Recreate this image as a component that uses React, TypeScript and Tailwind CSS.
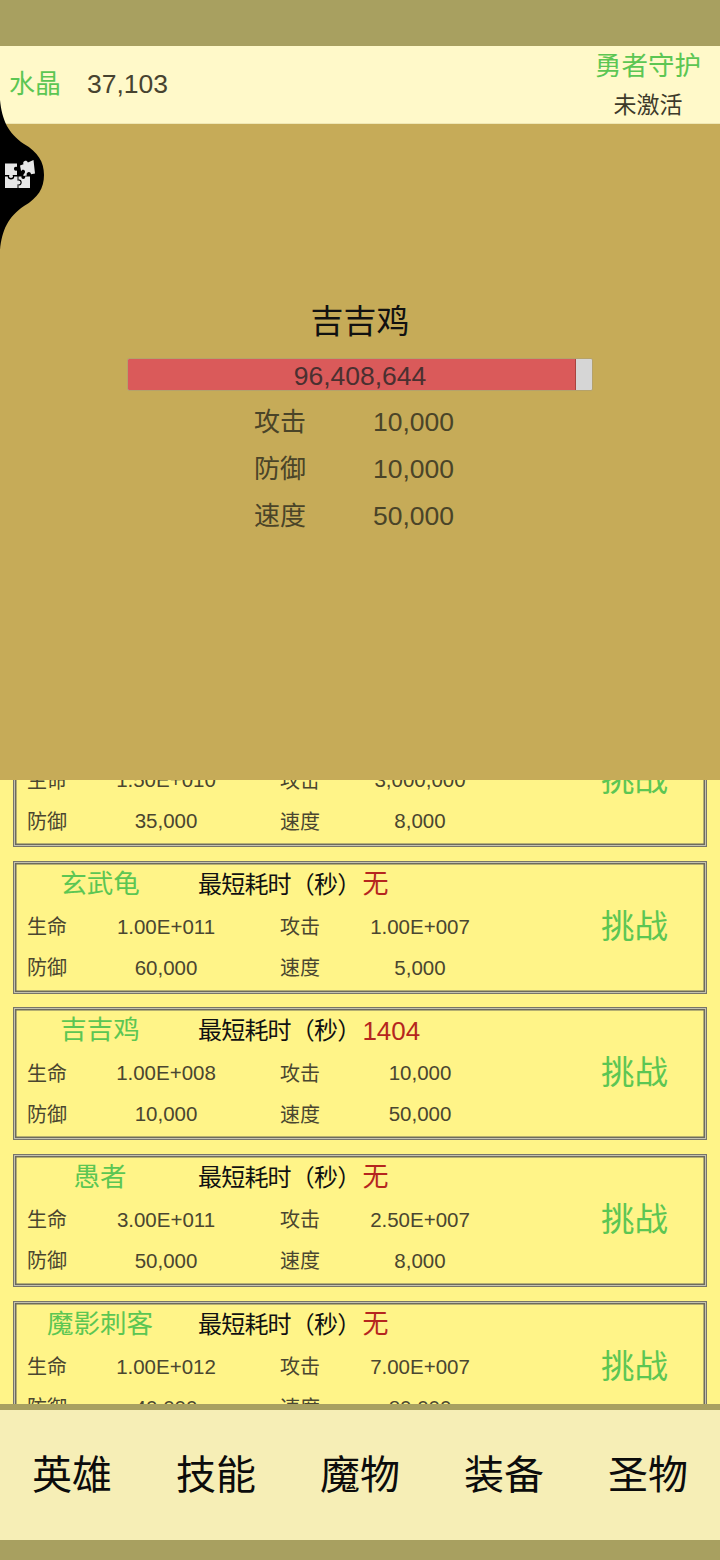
const FONT = "font-['Liberation_Sans','Noto_Sans_CJK_SC',sans-serif]";

const monsters = [
  { name: "", time: "", hp: "1.50E+010", atk: "3,000,000", def: "35,000", spd: "8,000" },
  { name: "玄武龟", time: "无", hp: "1.00E+011", atk: "1.00E+007", def: "60,000", spd: "5,000" },
  { name: "吉吉鸡", time: "1404", hp: "1.00E+008", atk: "10,000", def: "10,000", spd: "50,000" },
  { name: "愚者", time: "无", hp: "3.00E+011", atk: "2.50E+007", def: "50,000", spd: "8,000" },
  { name: "魔影刺客", time: "无", hp: "1.00E+012", atk: "7.00E+007", def: "40,000", spd: "80,000" },
];

const stats = [
  { label: "攻击", value: "10,000" },
  { label: "防御", value: "10,000" },
  { label: "速度", value: "50,000" },
];

const tabs = ["英雄", "技能", "魔物", "装备", "圣物"];

function Row({ a, b, c, d }: { a: string; b: string; c: string; d: string }) {
  return (
    <div className="flex h-[41px] items-center whitespace-nowrap text-[20.5px] text-[#4a4630]">
      <div className="w-[40px] shrink-0 text-[20px]">{a}</div>
      <div className="w-[198px] shrink-0 text-center">{b}</div>
      <div className="ml-[15px] w-[40px] shrink-0 text-[20px]">{c}</div>
      <div className="w-[200px] shrink-0 text-center">{d}</div>
    </div>
  );
}

function MonsterCard({ m }: { m: (typeof monsters)[number] }) {
  return (
    <div className="relative h-[133px] shrink-0 border border-[#77756a] bg-[#fff488] px-[13px] pt-[3px] shadow-[inset_0_0_0_1px_#c4c2ae,inset_0_0_0_2.500px_#6d6b5c]">
      <div className="mb-[2px] flex h-[40px] items-center whitespace-nowrap">
        <div className="w-[146px] shrink-0 text-center text-[26.500px] text-[#5cc653]">{m.name}</div>
        <div className="ml-[25px] text-[24px] tracking-[-0.8px] text-[#111]">最短耗时（秒）</div>
        <div className="ml-[2px] text-[26px] text-[#b5261e]">{m.time}</div>
      </div>
      <Row a="生命" b={m.hp} c="攻击" d={m.atk} />
      <Row a="防御" b={m.def} c="速度" d={m.spd} />
      <div className="absolute right-[38px] top-[42px] text-[33.500px] leading-[46px] text-[#5cc653]">挑战</div>
    </div>
  );
}

function PuzzleIcon() {
  return (
    <svg viewBox="0 0 40 40" className="h-[40px] w-[40px]" fill="#e8e8e8">
      {/* top left */}
      <path d="M5 8.500H17V12c-2-.7-3 .4-3 1.800s1 2.500 3 1.800V20H12.500c.2.600.6 1 .5 1.500-.2 1-1 1.400-2 1.400s-1.800-.4-2-1.400c-.1-.5.3-.9.500-1.500H5Z" />
      {/* top right, tilted */}
      <path d="M20 10.500l3.500-1.300c-.7-1.600-.1-2.800 1.200-3.300s2.600 0 3.200 1.600L33.500 5 35 18.500l-4 .8c-.2-1.700-1.400-2.500-2.800-2.100s-2 1.700-1.300 3.200l-3.400.6c-.3-1.400.4-2.300 1.200-3.100.8-1 .2-2.900-1.200-3.100-1.200-.2-2 .5-2.400 1.500Z" />
      {/* bottom left */}
      <path d="M5 21.500H7.800c-.2 2 1.200 3 3.200 3s3.400-1 3.200-3H17.500V25.800c1.700-.7 3 .2 3 1.700s-1.300 2.400-3 1.700V33H5Z" />
      {/* bottom right */}
      <path d="M18.500 21.500H21.500c-.4 1.400.5 2.500 1.800 2.500s2.200-1.100 1.800-2.500H30V33H18.500V30.300c2 .5 3.200-1 3.200-2.800s-1.200-3.300-3.200-2.800Z" />
    </svg>
  );
}

export default function App() {
  return (
    <div className={`relative flex h-[1560px] w-[720px] flex-col overflow-hidden bg-[#a8a060] ${FONT}`}>
      <div className="h-[46px] shrink-0 bg-[#a8a060]" />

      <header className="flex h-[78px] shrink-0 items-center border-b border-[#efe7b4] bg-[#fff9c9] pl-[9px]">
        <span className="w-[78px] text-[26px] text-[#5cc653]">水晶</span>
        <span className="text-[26.500px] text-[#47432f]">37,103</span>
        <div className="ml-auto flex w-[144px] flex-col items-center whitespace-nowrap pt-[4px]">
          <span className="text-[26.500px] leading-[38px] text-[#5cc653]">勇者守护</span>
          <span className="text-[23px] leading-[41px] text-[#3d3a2a]">未激活</span>
        </div>
      </header>

      <section className="flex h-[656px] shrink-0 flex-col items-center bg-[#c6ab58] pt-[176px]">
        <h1 className="text-[33px] leading-[44px] text-[#111]">吉吉鸡</h1>
        <div className="relative mt-[14px] h-[33px] w-[466px] overflow-hidden rounded-[2px] border border-[#b5a26a] bg-[#d6d6d6]">
          <div className="h-full w-[448px] border-r border-[#a8443f] bg-[#da5a5a]" />
          <div className="absolute inset-0 flex items-center justify-center pt-[5px] text-[26.500px] text-[#4a3030]">96,408,644</div>
        </div>
        <div className="mt-[8px] flex w-[212px] flex-col text-[26.500px] text-[#4a4428]">
          {stats.map((s) => (
            <div key={s.label} className="flex h-[47px] items-center">
              <span className="w-[119px] shrink-0 text-[26px]">{s.label}</span>
              <span>{s.value}</span>
            </div>
          ))}
        </div>
      </section>

      <main className="h-[624px] shrink-0 overflow-hidden bg-[#fff488]">
        <div className="mx-[13px] mt-[-66px] flex flex-col gap-[13.670px]">
          {monsters.map((m, i) => (
            <MonsterCard key={i} m={m} />
          ))}
        </div>
      </main>

      <div className="h-[6px] shrink-0 bg-[#a8a060]" />
      <nav className="grid h-[130px] shrink-0 grid-cols-5 items-center bg-[#f6eeb6]">
        {tabs.map((t) => (
          <span key={t} className="text-center text-[40px] text-[#0c0c0c]">{t}</span>
        ))}
      </nav>
      <div className="h-[20px] shrink-0 bg-[#a8a060]" />

      <div className="absolute left-0 top-[100px] h-[150px] w-[44px]">
        <svg viewBox="0 0 44 150" className="absolute inset-0 h-full w-full">
          <path d="M0 0C2 20 8 33 24 44C38 52 44 62 44 75C44 88 38 98 24 106C8 117 2 130 0 150Z" fill="#000" />
        </svg>
        <div className="absolute left-0 top-[55px]">
          <PuzzleIcon />
        </div>
      </div>
    </div>
  );
}
